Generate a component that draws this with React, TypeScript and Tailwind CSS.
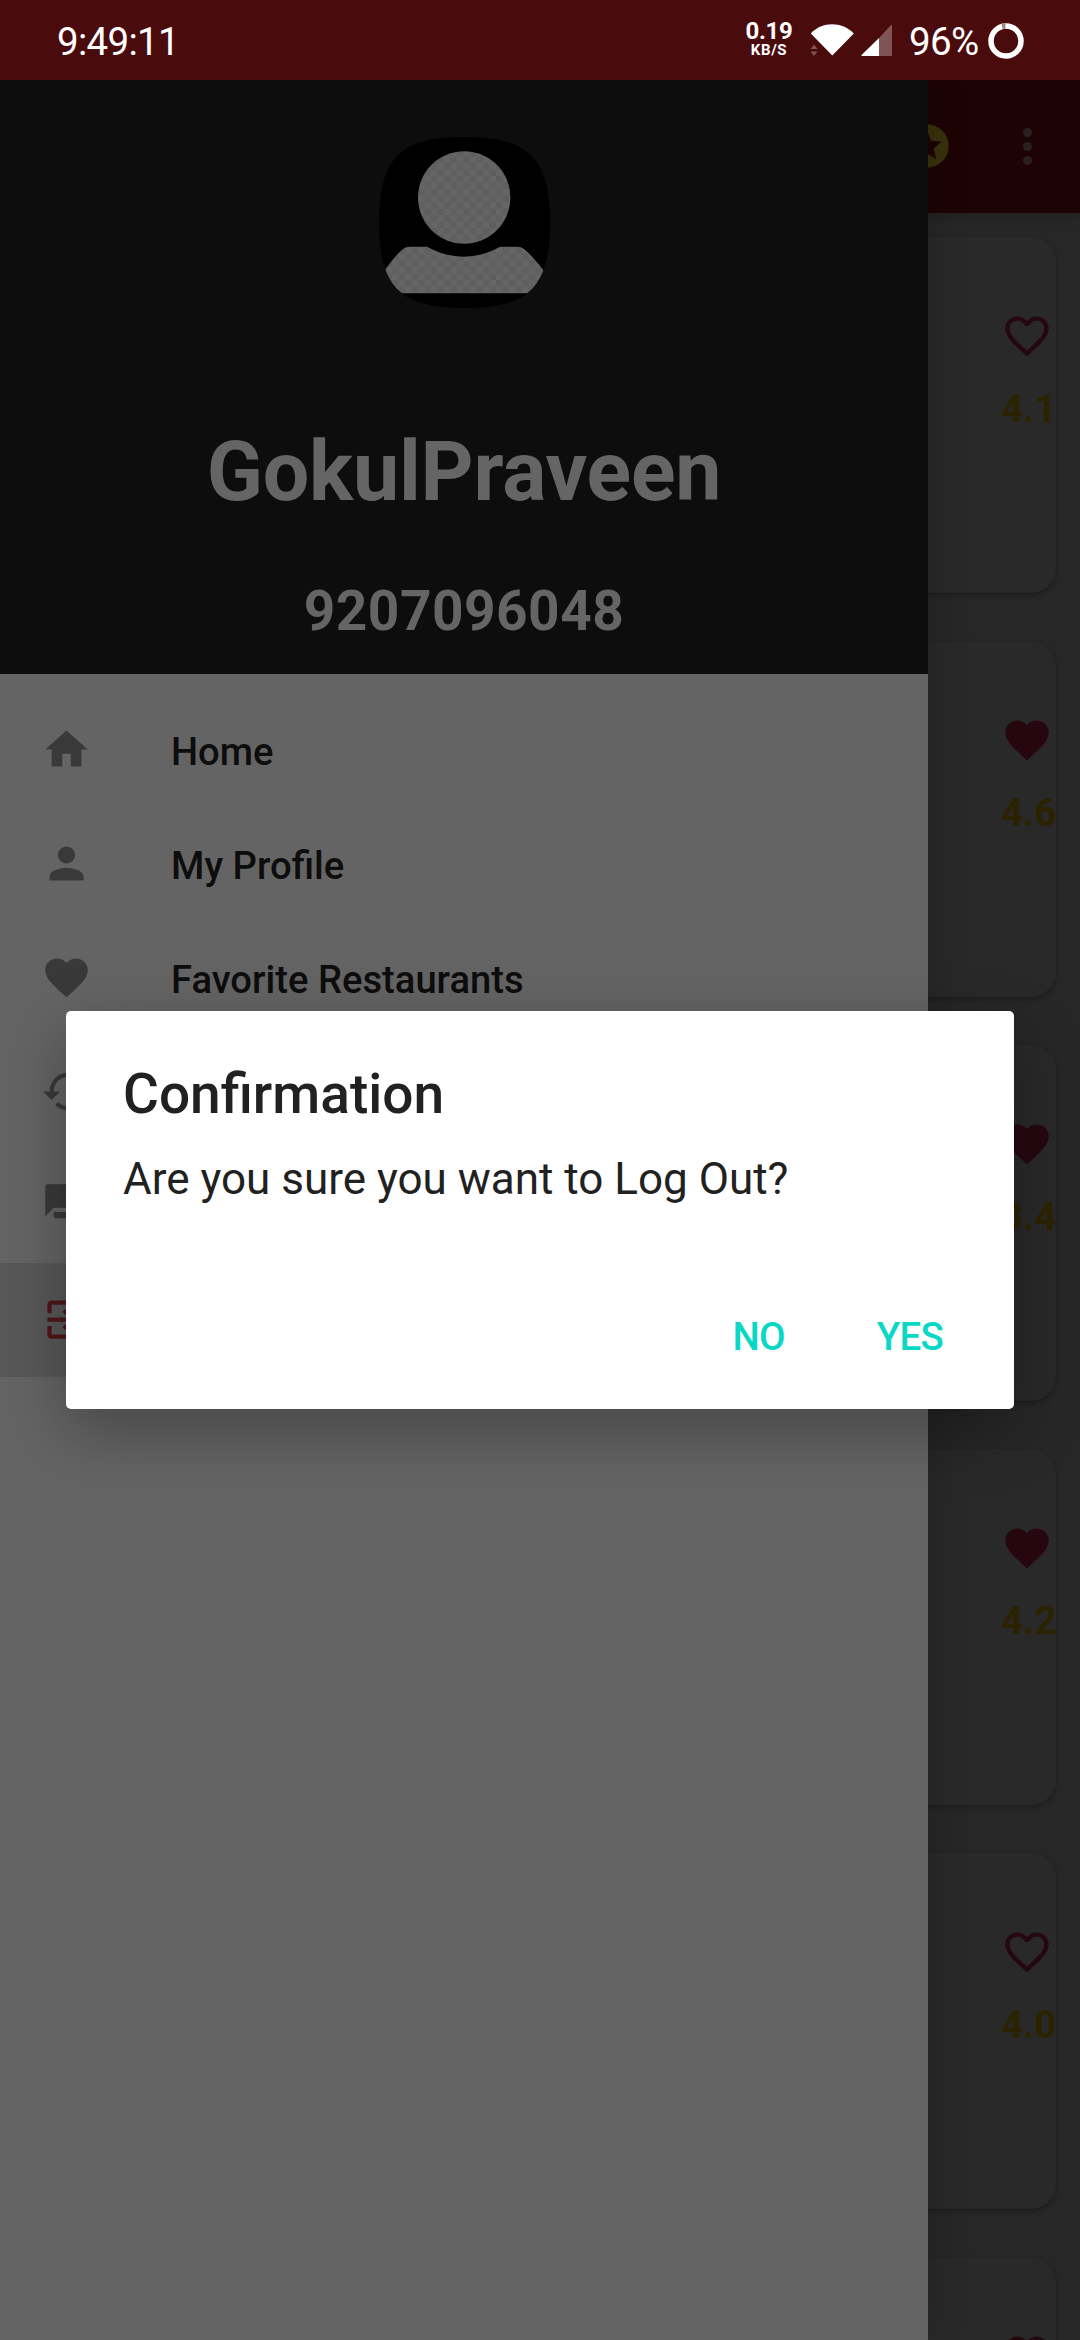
import React from 'react';

const HEART =
  'M12 21.35l-1.45-1.32C5.4 15.36 2 12.28 2 8.5 2 5.42 4.42 3 7.5 3c1.74 0 3.41.81 4.5 2.09C13.09 3.81 14.76 3 16.5 3 19.58 3 22 5.42 22 8.5c0 3.78-3.4 6.86-8.55 11.54L12 21.35z';
const HEART_OUTLINE =
  'M16.5 3c-1.74 0-3.41.81-4.5 2.09C10.91 3.81 9.24 3 7.5 3 4.42 3 2 5.42 2 8.5c0 3.78 3.4 6.86 8.55 11.54L12 21.35l1.45-1.32C18.6 15.36 22 12.28 22 8.5 22 5.42 19.58 3 16.5 3zm-4.4 15.55l-.1.1-.1-.1C7.14 14.24 4 11.39 4 8.5 4 6.5 5.5 5 7.5 5c1.54 0 3.04.99 3.57 2.36h1.87C13.46 5.99 14.96 5 16.5 5c2 0 3.5 1.5 3.5 3.5 0 2.89-3.14 5.74-7.9 10.05z';
const HOME = 'M10 20v-6h4v6h5v-8h3L12 3 2 12h3v8z';
const PERSON =
  'M12 12c2.21 0 4-1.79 4-4s-1.79-4-4-4-4 1.79-4 4 1.79 4 4 4zm0 2c-2.67 0-8 1.34-8 4v2h16v-2c0-2.66-5.33-4-8-4z';
const HISTORY =
  'M13 3c-4.97 0-9 4.03-9 9H1l4 4 4-4H6c0-3.87 3.13-7 7-7s7 3.13 7 7-3.13 7-7 7c-1.93 0-3.68-.79-4.94-2.06l-1.42 1.42C8.27 19.99 10.51 21 13 21c4.97 0 9-4.03 9-9s-4.03-9-9-9z';
const CHAT =
  'M21 6h-2v9H6v2c0 .55.45 1 1 1h11l4 4V7c0-.55-.45-1-1-1zm-4 6V3c0-.55-.45-1-1-1H3c-.55 0-1 .45-1 1v14l4-4h10c.55 0 1-.45 1-1z';
const EXIT =
  'M10.09 15.59L11.5 17l5-5-5-5-1.41 1.41L12.67 11H3v2h9.67l-2.58 2.59zM19 3H5c-1.11 0-2 .9-2 2v4h2V5h14v14H5v-4H3v4c0 1.1.89 2 2 2h14c1.1 0 2-.9 2-2V5c0-1.1-.9-2-2-2z';

type IconProps = { d: string; className: string };

function Icon({ d, className }: IconProps) {
  return (
    <svg viewBox="0 0 24 24" className={className} fill="currentColor">
      <path d={d} />
    </svg>
  );
}

function StatusBar() {
  return (
    <header className="flex h-20 items-center justify-between bg-[#4a0b0d] pl-[57px] pr-[56px] text-white">
      <span className="mt-[4px] text-[38.5px] leading-none tracking-[-0.7px]">9:49:11</span>
      <div className="flex h-20 items-center">
        <div className="-mt-[2px] mr-[16px] flex w-[50px] flex-col items-center font-bold">
          <span className="text-[24px] leading-[22px] tracking-[-0.3px]">0.19</span>
          <span className="text-[15px] leading-[16px] tracking-[0.6px]">KB/S</span>
        </div>
        <svg width="44" height="34" viewBox="0 0 44 34" className="mr-[7px]">
          <path d="M0.8 10.5C12-1.8 32-1.8 43.8 10.5L22.3 32.5z" fill="#fff" />
          <path d="M0.5 26l3.5-4.5 3.5 4.5zM0.5 28.5h7L4 33z" fill="#805456" />
        </svg>
        <svg width="31" height="32" viewBox="0 0 31 32" className="mr-[17px] mt-[2px]">
          <path d="M30 0q1 0 1 1v29q0 1-1 1H18V13z" fill="#805456" />
          <path d="M18 13v18H1q-1 0-.5-1z" fill="#fff" />
        </svg>
        <span className="mt-[4px] w-[79px] text-[38.5px] leading-none tracking-[-0.6px]">96%</span>
        <svg width="36" height="36" viewBox="0 0 36 36" className="mt-px">
          <circle cx="18" cy="18" r="15" fill="none" stroke="#fff" strokeWidth="5.5" />
          <path d="M14 3.3A15 15 0 0 1 17.5 3" fill="none" stroke="#a58586" strokeWidth="5.5" />
        </svg>
      </div>
    </header>
  );
}

function AppBar() {
  return (
    <div className="relative flex h-[133px] items-center justify-end bg-[#1d0304] pr-[48px] shadow-[0_4px_10px_rgba(0,0,0,0.15)]">
      <svg width="52" height="52" viewBox="0 0 24 24" className="mb-[2px] mr-[70px] text-[#38310b]" fill="currentColor">
        <path
          fillRule="evenodd"
          d="M12 2a10 10 0 1 0 0 20 10 10 0 0 0 0-20zm4.23 16L12 15.45 7.77 18l1.12-4.81-3.73-3.23 4.92-.42L12 5l1.92 4.53 4.92.42-3.73 3.23z"
        />
      </svg>
      <div className="flex flex-col gap-[5px]">
        <i className="size-[9px] rounded-full bg-[#2a2020]" />
        <i className="size-[9px] rounded-full bg-[#2a2020]" />
        <i className="size-[9px] rounded-full bg-[#2a2020]" />
      </div>
    </div>
  );
}

const ratings = [
  { value: '4.1', favorite: false },
  { value: '4.6', favorite: true },
  { value: '3.4', favorite: true },
  { value: '4.2', favorite: true },
  { value: '4.0', favorite: false },
  { value: '', favorite: false },
];

function RestaurantList() {
  return (
    <div className="flex flex-col gap-[48px] pl-6 pr-6 pt-6">
      {ratings.map((r, i) => (
        <div
          key={i}
          className="flex h-[356px] shrink-0 flex-col items-end rounded-[25px] bg-[#292929] pt-[73px] shadow-[0_2px_5px_rgba(0,0,0,0.3)]"
        >
          <div className="flex w-[55px] flex-col">
            <Icon d={r.favorite ? HEART : HEART_OUTLINE} className="size-[52px] text-[#26070f]" />
            {r.value && (
              <span className="mt-[24px] text-[38.5px] font-bold leading-[45px] text-[#2b2300]">{r.value}</span>
            )}
          </div>
        </div>
      ))}
    </div>
  );
}

function Avatar() {
  return (
    <svg width="171" height="171" viewBox="0 0 171 171" className="mt-[57px]">
      <defs>
        <clipPath id="squircle">
          <path d="M85.5 0C150 0 171 21 171 85.5S150 171 85.5 171 0 150 0 85.5 21 0 85.5 0z" />
        </clipPath>
        <pattern id="checks" width="13" height="13" patternUnits="userSpaceOnUse">
          <rect width="13" height="13" fill="#656565" />
          <path d="M0 0h6.5v6.5H0zM6.5 6.5H13V13H6.5z" fill="#5f5f5f" />
        </pattern>
      </defs>
      <g clipPath="url(#squircle)">
        <rect width="171" height="171" fill="#000" />
        <circle cx="85.2" cy="60.5" r="46.2" fill="url(#checks)" />
        <path
          d="M0 142Q14 120 24 112q3-2.3 7-2.3h17q37 20 73 0h17q4 0 7 2.3 10 8 26 30v14.3H0z"
          fill="url(#checks)"
        />
      </g>
    </svg>
  );
}

const menu = [
  { label: 'Home', d: HOME },
  { label: 'My Profile', d: PERSON },
  { label: 'Favorite Restaurants', d: HEART },
  { label: '', d: HISTORY },
  { label: '', d: CHAT },
];

function Drawer() {
  return (
    <aside className="absolute left-0 top-0 z-10 flex h-full w-[928px] flex-col bg-[#646464] shadow-[0_0_40px_rgba(0,0,0,0.2)]">
      <div className="flex h-[594px] flex-col items-center bg-[#0d0d0d] font-bold text-[#656565]">
        <Avatar />
        <h1 className="mt-[115px] text-[82.5px] leading-[97px] tracking-[-0.2px]">GokulPraveen</h1>
        <p className="mt-[59px] text-[55px] leading-[64px] tracking-[0.5px]">9207096048</p>
      </div>
      <nav className="flex flex-col pt-[19px] text-[38.2px] font-medium text-[#0d0d0d]">
        {menu.map((m, i) => (
          <div key={i} className="flex h-[114px] items-center pl-[41px]">
            <Icon d={m.d} className="mr-[79px] size-[51px] -translate-y-px text-[#393939]" />
            {m.label && <span className="mt-[5px] leading-[45px]">{m.label}</span>}
          </div>
        ))}
        <div className="flex h-[114px] items-center bg-[#585858] pl-[41px]">
          <Icon d={EXIT} className="size-[51px] -translate-y-px text-[#4f1719]" />
        </div>
      </nav>
    </aside>
  );
}

function ConfirmDialog() {
  return (
    <section
      role="dialog"
      className="absolute left-[66px] top-[1011px] z-20 flex h-[398px] w-[948px] flex-col rounded-[5px] bg-white pl-[57px] pr-[49px] text-[#212121] shadow-[0_22px_66px_rgba(0,0,0,0.3)]"
    >
      <h2 className="mt-[51px] text-[55px] font-medium leading-[65px]">Confirmation</h2>
      <p className="mt-[26px] text-[44px] leading-[52px]">Are you sure you want to Log Out?</p>
      <div className="mt-[109px] flex justify-end gap-[48px] text-[38.5px] font-medium leading-[45px] tracking-[-0.8px] text-[#09d8c5]">
        <button className="px-[22px]">NO</button>
        <button className="px-[22px]">YES</button>
      </div>
    </section>
  );
}

export default function App() {
  return (
    <div className="relative h-[2340px] w-[1080px] overflow-hidden bg-[#272727] font-['Roboto',sans-serif]">
      <StatusBar />
      <main className="relative h-[2260px] overflow-hidden">
        <AppBar />
        <RestaurantList />
        <Drawer />
      </main>
      <ConfirmDialog />
    </div>
  );
}
